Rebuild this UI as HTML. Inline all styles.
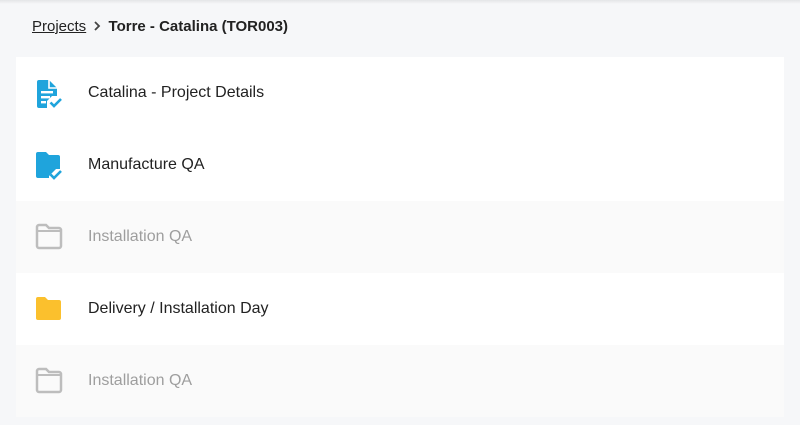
<!DOCTYPE html>
<html><head><style>
body{margin:0;width:800px;height:425px;background:#f6f7f9;font-family:"Liberation Sans",sans-serif;position:relative;overflow:hidden}
.top{position:absolute;left:0;top:0;width:800px;height:4px;background:linear-gradient(#e4e5e7,#f6f7f9)}
.bc{position:absolute;left:32px;top:17px;font-size:15px;color:#222;line-height:20px}
.bc a{color:#222;text-decoration:underline}
.bc b{font-weight:bold}
.card{position:absolute;left:16px;top:57px;width:768px}
.row{height:72px;position:relative;background:#fff}
.row.g{background:#fafafa}
.row svg{position:absolute;left:18px;top:22px;overflow:visible}
.row span{position:absolute;left:72px;top:26px;font-size:16px;color:#222;line-height:20px}
.row.g span{color:#9e9e9e}
</style></head><body>
<div class="top"></div>
<div class="bc"><a>Projects</a> <svg width="8" height="10" viewBox="0 0 8 10" style="margin:0 3px"><path d="M2 1l4 4-4 4" fill="none" stroke="#444" stroke-width="1.8"/></svg> <b>Torre - Catalina (TOR003)</b></div>
<div class="card">
<div class="row"><svg width="30" height="30" viewBox="0 0 30 30"><path d="M5 1h10l8 8v8h-5l-5 5v7H5a2 2 0 0 1-2-2V3a2 2 0 0 1 2-2z" fill="#1fa4dc"/><path d="M15 1v8h8" fill="none" stroke="#fff" stroke-width="1.6"/><rect x="7" y="12" width="12" height="2.4" fill="#fff"/><rect x="7" y="17" width="9" height="2.4" fill="#fff"/><rect x="7" y="22" width="5" height="2.4" fill="#fff"/><path d="M16.5 23.5l3.5 3.5 7-7" fill="none" stroke="#1fa4dc" stroke-width="2.6"/></svg><span>Catalina - Project Details</span></div>
<div class="row"><svg width="30" height="30" viewBox="0 0 30 30"><path d="M2 3a2 2 0 0 1 2-2h8l3 3h9a2 2 0 0 1 2 2v12h-4l-7 7v2H4a2 2 0 0 1-2-2z" fill="#1fa4dc"/><path d="M16.5 23.5l3.5 3.5 7-7" fill="none" stroke="#1fa4dc" stroke-width="2.6"/></svg><span>Manufacture QA</span></div>
<div class="row g"><svg width="30" height="30" viewBox="0 0 30 30"><path d="M3 4a2 2 0 0 1 2-2h7l3 3h10a2 2 0 0 1 2 2v16a2 2 0 0 1-2 2H5a2 2 0 0 1-2-2z" fill="none" stroke="#bdbdbd" stroke-width="2.5"/><path d="M4 8h22" stroke="#bdbdbd" stroke-width="2"/></svg><span>Installation QA</span></div>
<div class="row"><svg width="30" height="30" viewBox="0 0 30 30"><path d="M2 4a2 2 0 0 1 2-2h7l3 3h11a2 2 0 0 1 2 2v16a2 2 0 0 1-2 2H4a2 2 0 0 1-2-2z" fill="#fbc02d"/></svg><span>Delivery / Installation Day</span></div>
<div class="row g"><svg width="30" height="30" viewBox="0 0 30 30"><path d="M3 4a2 2 0 0 1 2-2h7l3 3h10a2 2 0 0 1 2 2v16a2 2 0 0 1-2 2H5a2 2 0 0 1-2-2z" fill="none" stroke="#bdbdbd" stroke-width="2.5"/><path d="M4 8h22" stroke="#bdbdbd" stroke-width="2"/></svg><span>Installation QA</span></div>
</div>
</body></html>
